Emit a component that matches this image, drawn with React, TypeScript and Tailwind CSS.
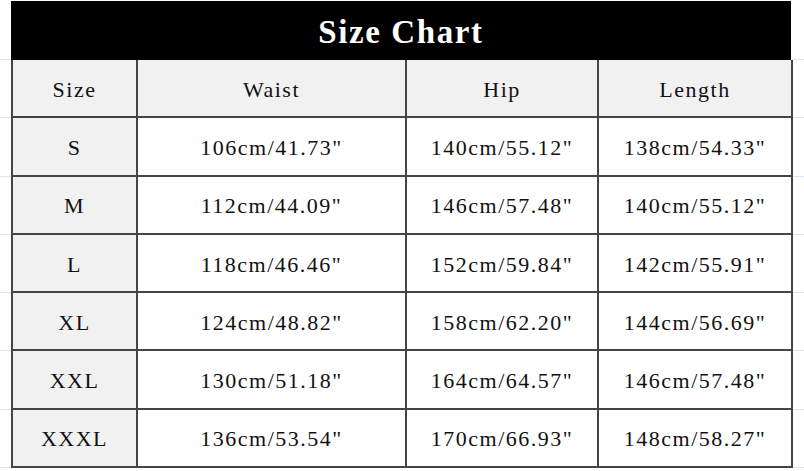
const COLUMNS = ['Size', 'Waist', 'Hip', 'Length'];

const ROWS: string[][] = [
  ['S', '106cm/41.73"', '140cm/55.12"', '138cm/54.33"'],
  ['M', '112cm/44.09"', '146cm/57.48"', '140cm/55.12"'],
  ['L', '118cm/46.46"', '152cm/59.84"', '142cm/55.91"'],
  ['XL', '124cm/48.82"', '158cm/62.20"', '144cm/56.69"'],
  ['XXL', '130cm/51.18"', '164cm/64.57"', '146cm/57.48"'],
  ['XXXL', '136cm/53.54"', '170cm/66.93"', '148cm/58.27"'],
];

function Row({ cells, shaded }: { cells: string[]; shaded: boolean }) {
  return (
    <div className="flex h-[58.3px]">
      {/* faint spreadsheet gridline left of the table */}
      <div className="w-[11px] border-b border-[#dbe6f1]" />
      <div className="grid grid-cols-[125px_269px_192px_194px] border-l-2 border-[#444]">
        {cells.map((c, i) => (
          <div
            key={i}
            className={`flex items-center justify-center pt-[2px] border-r-2 border-b-2 border-[#444] text-[22px] tracking-[1.5px] text-[#111] ${
              shaded || i === 0 ? 'bg-[#f1f1f1]' : 'bg-white'
            }`}
          >
            {c}
          </div>
        ))}
      </div>
      <div className="flex-1 border-b border-[#dbe6f1]" />
    </div>
  );
}

export default function App() {
  return (
    <div
      className="w-[804px] h-[471px] bg-white pt-[1px]"
      style={{ fontFamily: '"Liberation Serif", "Times New Roman", serif' }}
    >
      <div className="flex">
        <div className="w-[11px] border-b border-[#dbe6f1]" />
        <div className="w-[780px] h-[59px] bg-black flex items-center justify-center">
          <span className="text-white font-bold text-[33px] tracking-[1.6px] pt-[4px]">Size Chart</span>
        </div>
        <div className="flex-1 border-b border-[#dbe6f1]" />
      </div>
      <Row cells={COLUMNS} shaded />
      {ROWS.map((r) => (
        <Row key={r[0]} cells={r} shaded={false} />
      ))}
    </div>
  );
}
